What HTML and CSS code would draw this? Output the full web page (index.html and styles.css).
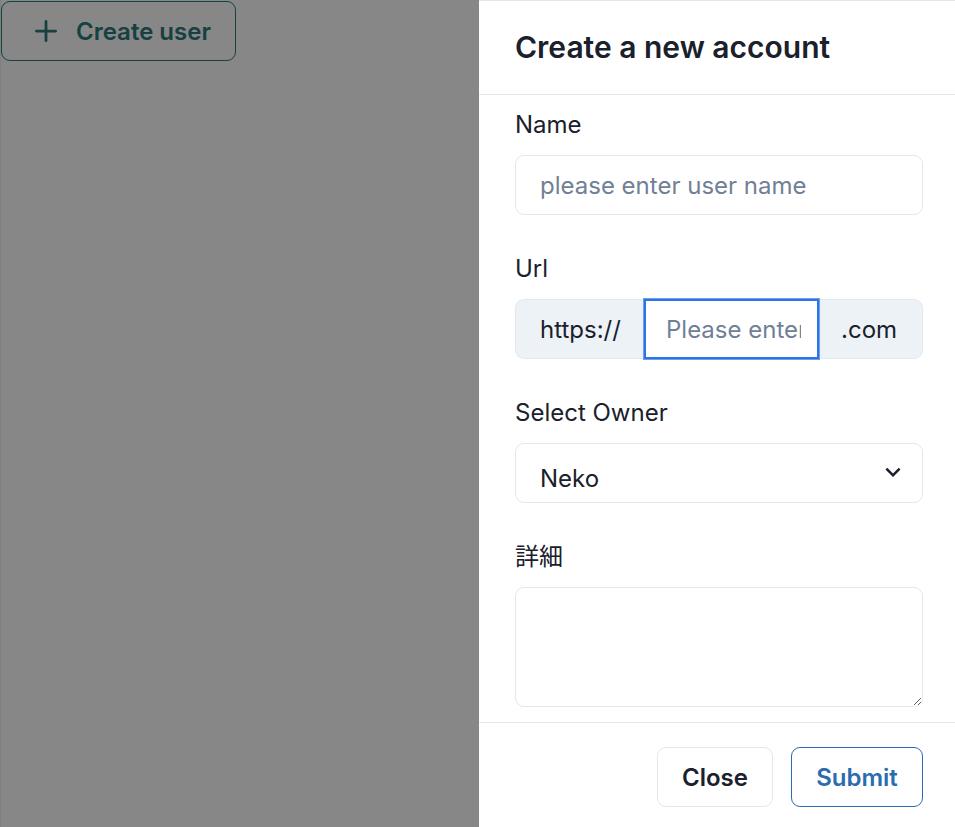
FILE: index.html
```html
<!DOCTYPE html>
<html lang="en">
<head>
<meta charset="utf-8">
<title>Create a new account</title>
<link rel="stylesheet" href="styles.css">
</head>
<body>
<main class="page">
  <button class="create-btn" type="button">
    <svg class="plus" viewBox="0 0 24 24" aria-hidden="true"><path fill="currentColor" d="M0,12a1.5,1.5,0,0,0,1.5,1.5h8.75a.25.25,0,0,1,.25.25V22.5a1.5,1.5,0,0,0,3,0V13.75a.25.25,0,0,1,.25-.25H22.5a1.5,1.5,0,0,0,0-3H13.75a.25.25,0,0,1-.25-.25V1.5a1.5,1.5,0,0,0-3,0v8.75a.25.25,0,0,1-.25.25H1.5A1.5,1.5,0,0,0,0,12Z"/></svg>
    <span>Create user</span>
  </button>
</main>
<div class="overlay"></div>
<aside class="drawer">
  <header class="drawer-header">Create a new account</header>
  <div class="drawer-body">
    <div class="field">
      <label class="label" for="name">Name</label>
      <input class="input" id="name" type="text" placeholder="please enter user name">
    </div>
    <div class="field">
      <label class="label" for="url">Url</label>
      <div class="group">
        <span class="addon addon-left">https://</span>
        <input class="input input-mid focused" id="url" type="text" placeholder="Please enter domain">
        <span class="addon addon-right">.com</span>
      </div>
    </div>
    <div class="field">
      <label class="label" for="owner">Select Owner</label>
      <div class="select">
        <span class="select-value">Neko</span>
        <svg class="chevron" viewBox="0 0 24 24" aria-hidden="true"><path fill="currentColor" d="M16.59 8.59L12 13.170 7.41 8.59 6 10l6 6 6-6z"/></svg>
      </div>
    </div>
    <div class="field">
      <label class="label" for="desc">詳細</label>
      <textarea class="textarea" id="desc"></textarea>
    </div>
  </div>
  <footer class="drawer-footer">
    <button class="btn btn-close" type="button">Close</button>
    <button class="btn btn-submit" type="button">Submit</button>
  </footer>
</aside>
</body>
</html>
```
FILE: styles.css
```css
* { box-sizing: border-box; }
html, body {
  margin: 0;
  padding: 0;
  height: 100%;
  overflow: hidden;
}
body {
  font-family: Inter, "Noto Sans CJK JP", sans-serif;
  color: #1a202c;
  background: #ffffff;
}
.page {
  padding: 1px 0 0 1px;
}
.create-btn {
  display: inline-flex;
  align-items: center;
  height: 60px;
  width: 235px;
  padding: 0 0 0 33px;
  border: 1.5px solid #2c7a7b;
  border-radius: 9px;
  background: transparent;
  color: #2c7a7b;
  font-family: Inter, sans-serif;
  font-weight: 600;
  font-size: 24px;
}
.plus {
  width: 22px;
  height: 22px;
  margin-right: 19px;
}
.overlay {
  position: fixed;
  inset: 0;
  background: rgba(0, 0, 0, 0.47);
  border-left: 1px solid rgba(0, 0, 0, 0.06);
}
.drawer {
  position: fixed;
  top: 0;
  right: 0;
  width: 476px;
  height: 100vh;
  background: #ffffff;
  border-top: 1px solid #e6e6e6;
  display: flex;
  flex-direction: column;
}
.drawer-header {
  padding: 24px 36px 24px;
  font-size: 30px;
  line-height: 45px;
  font-weight: 600;
  color: #1a202c;
  border-bottom: 1.5px solid #e2e8f0;
}
.drawer-body {
  padding: 12px 32px 15px 36px;
  display: flex;
  flex-direction: column;
  gap: 36px;
}
.field {
  display: flex;
  flex-direction: column;
}
.label {
  font-size: 24px;
  line-height: 36px;
  font-weight: 400;
  margin-bottom: 12px;
  color: #1a202c;
}
.input {
  height: 60px;
  width: 100%;
  padding: 0 24px;
  border: 1.5px solid #e2e8f0;
  border-radius: 9px;
  font-family: Inter, sans-serif;
  font-size: 24px;
  color: #1a202c;
  background: #fff;
  outline: none;
}
.input::placeholder { color: #718096; }
.group {
  display: flex;
  height: 60px;
}
.addon {
  display: flex;
  align-items: center;
  padding: 0 24px;
  background: #edf2f7;
  border: 1.5px solid #e2e8f0;
  font-size: 24px;
  color: #1a202c;
  white-space: nowrap;
}
.addon-left {
  border-radius: 9px 0 0 9px;
  border-right: none;
  width: 129px;
}
.addon-right {
  border-radius: 0 9px 9px 0;
  border-left: none;
  flex: 1;
  padding-left: 22px;
}
.input-mid {
  width: 175px;
  flex: none;
  border-radius: 0;
  padding: 0 16px 0 20px;
}
.focused {
  border: 2px solid #2f74e4;
  box-shadow: 0 0 0 1px #6a9fef;
  position: relative;
  z-index: 1;
}
.select {
  height: 60px;
  display: flex;
  align-items: center;
  justify-content: space-between;
  padding: 10px 14px 0 24px;
  border: 1.5px solid #e2e8f0;
  border-radius: 9px;
  font-size: 24px;
  color: #1a202c;
}
.chevron {
  width: 30px;
  height: 30px;
  margin-top: -12px;
  color: #1a202c;
}
.textarea {
  height: 120px;
  width: 100%;
  border: 1.5px solid #e2e8f0;
  border-radius: 9px;
  padding: 12px 24px;
  font-family: Inter, sans-serif;
  font-size: 24px;
  resize: vertical;
}
.drawer-footer {
  display: flex;
  justify-content: flex-end;
  gap: 18px;
  padding: 24px 32px 24px 36px;
  border-top: 1.5px solid #e2e8f0;
}
.btn {
  height: 60px;
  padding: 0 24px;
  border-radius: 9px;
  background: #fff;
  font-family: Inter, sans-serif;
  font-size: 24px;
  font-weight: 600;
}
.btn-close {
  border: 1.5px solid #e2e8f0;
  color: #1a202c;
  width: 116px;
}
.btn-submit {
  border: 1.5px solid #2b6cb0;
  color: #2b6cb0;
  width: 132px;
}
```
